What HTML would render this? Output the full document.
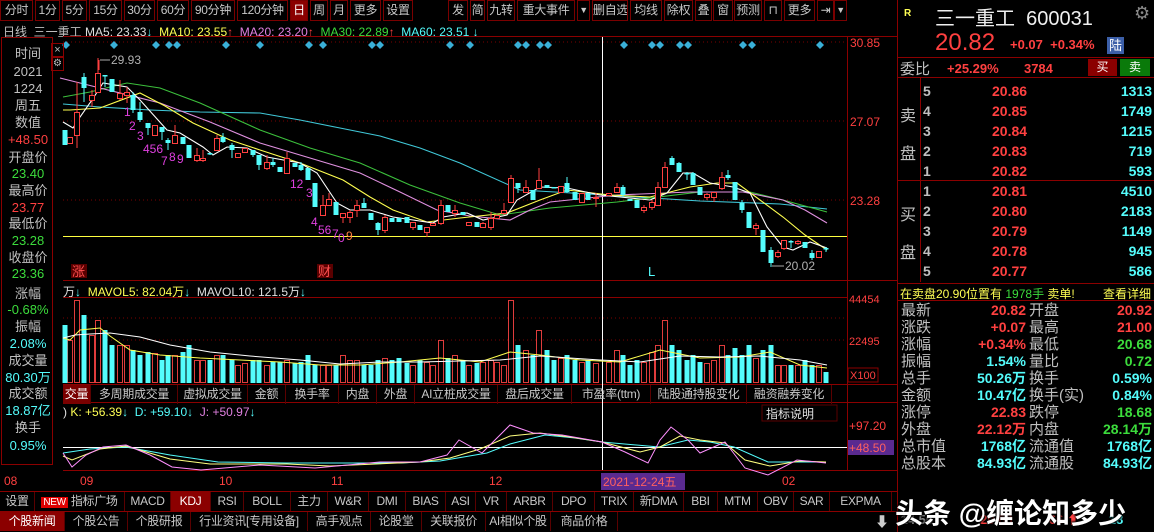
<!DOCTYPE html>
<html><head><meta charset="utf-8"><style>
*{margin:0;padding:0;box-sizing:border-box}
body{width:1154px;height:532px;background:#000;overflow:hidden;position:relative;font-family:"Liberation Sans","Noto Sans CJK SC",sans-serif;font-size:12px;color:#c0c0c0}
.a{position:absolute;white-space:nowrap}
.tb{position:absolute;top:0;height:21px;border:1px solid #7a0000;line-height:19px;text-align:center;font-size:12px;color:#c8c8c8;white-space:nowrap;overflow:hidden;letter-spacing:-0.3px}
.it{position:absolute;height:19px;line-height:19px;text-align:center;border-right:1px solid #5a0000;font-size:12px;color:#c8c8c8;white-space:nowrap;overflow:hidden;letter-spacing:-0.3px}
.r{color:#ff4040}.c{color:#54fcfc}.g{color:#3cdc3c}.y{color:#ffff54}.w{color:#e0e0e0}.p{color:#e080e0}
.lp div{position:absolute;left:0;width:52px;text-align:center;font-size:13px;line-height:16px}
.ob{position:absolute;font-size:14px;font-weight:bold}
.st{position:absolute;font-size:15px;line-height:17px}
</style></head><body>
<div class="tb" style="left:0;width:33px">分时</div><div class="tb" style="left:35px;width:25px">1分</div><div class="tb" style="left:62px;width:25px">5分</div><div class="tb" style="left:89px;width:33px">15分</div><div class="tb" style="left:124px;width:31px">30分</div><div class="tb" style="left:157px;width:32px">60分</div><div class="tb" style="left:191px;width:44px">90分钟</div><div class="tb" style="left:237px;width:51px">120分钟</div><div class="tb" style="left:290px;width:18px;background:#8b0000;color:#fff">日</div><div class="tb" style="left:310px;width:18px">周</div><div class="tb" style="left:330px;width:18px">月</div><div class="tb" style="left:350px;width:31px">更多</div><div class="tb" style="left:383px;width:30px">设置</div>
<div class="tb" style="left:448px;width:20px">发</div><div class="tb" style="left:470px;width:15px">简</div><div class="tb" style="left:487px;width:28px">九转</div><div class="tb" style="left:517px;width:58px">重大事件</div><div class="tb" style="left:577px;width:13px;font-size:9px">▼</div><div class="tb" style="left:592px;width:36px">删自选</div><div class="tb" style="left:630px;width:32px">均线</div><div class="tb" style="left:664px;width:29px">除权</div><div class="tb" style="left:695px;width:17px">叠</div><div class="tb" style="left:713px;width:20px">窗</div><div class="tb" style="left:734px;width:28px">预测</div><div class="tb" style="left:764px;width:18px">⊓</div><div class="tb" style="left:784px;width:31px">更多</div><div class="tb" style="left:817px;width:17px">⇥</div><div class="tb" style="left:834px;width:13px;font-size:9px">▼</div>
<div class="a" style="left:3px;top:23px;font-size:12px">日线 &nbsp;三一重工 <span class="w">MA5: 23.33</span><span class="c">↓</span> <span class="y">&nbsp;MA10: 23.55</span><span class="r">↑</span> <span class="p">&nbsp;MA20: 23.20</span><span class="r">↑</span> <span class="g">&nbsp;MA30: 22.89</span><span class="r">↑</span> <span class="c">&nbsp;MA60: 23.51 ↓</span></div>
<svg class="a" style="left:0;top:0" width="897" height="532">
<g stroke="#8b0000" stroke-width="1" fill="none">
<line x1="847.5" y1="37" x2="847.5" y2="470"/><line x1="63" y1="36.5" x2="897" y2="36.5"/>
<line x1="63" y1="280.5" x2="897" y2="280.5"/><line x1="63" y1="297.5" x2="847" y2="297.5"/><line x1="63" y1="384.5" x2="897" y2="384.5"/><line x1="63" y1="402.5" x2="897" y2="402.5"/><line x1="63" y1="470.5" x2="897" y2="470.5"/><line x1="0" y1="491.5" x2="897" y2="491.5"/><line x1="0" y1="511.5" x2="897" y2="511.5"/>
</g>
<g stroke="#7a0000" stroke-dasharray="1 3"><line x1="63" y1="42" x2="847" y2="42"/><line x1="63" y1="121" x2="847" y2="121"/><line x1="63" y1="200" x2="847" y2="200"/><line x1="63" y1="340" x2="847" y2="340"/><line x1="63" y1="318" x2="847" y2="318"/></g>
<text x="850" y="47" fill="#ff4040" font-size="12">30.85</text><text x="850" y="126" fill="#ff4040" font-size="12">27.07</text><text x="850" y="205" fill="#ff4040" font-size="12">23.28</text>
<text x="849" y="303" fill="#ff4040" font-size="11">44454</text><text x="849" y="345" fill="#ff4040" font-size="11">22495</text><rect x="848" y="368" width="30" height="14" fill="none" stroke="#8b0000"/><text x="850" y="379" fill="#ff4040" font-size="11">X100</text>
<text x="849" y="430" fill="#ff4040" font-size="12">+97.20</text><rect x="848" y="440" width="46" height="15" fill="#5a2a90"/><text x="849" y="452" fill="#ff6060" font-size="12">+48.50</text>
<g fill="#3ab0d8"><path d="M66 41l4 4-4 4-4-4zM114 41l4 4-4 4-4-4zM156 41l4 4-4 4-4-4zM169 41l4 4-4 4-4-4zM177 41l4 4-4 4-4-4zM226 41l4 4-4 4-4-4zM260 41l4 4-4 4-4-4zM309 41l4 4-4 4-4-4zM323 41l4 4-4 4-4-4zM372 41l4 4-4 4-4-4zM380 41l4 4-4 4-4-4zM450 41l4 4-4 4-4-4zM470 41l4 4-4 4-4-4zM518 41l4 4-4 4-4-4zM526 41l4 4-4 4-4-4zM540 41l4 4-4 4-4-4zM548 41l4 4-4 4-4-4zM624 41l4 4-4 4-4-4zM652 41l4 4-4 4-4-4zM660 41l4 4-4 4-4-4zM680 41l4 4-4 4-4-4zM688 41l4 4-4 4-4-4zM743 41l4 4-4 4-4-4zM752 41l4 4-4 4-4-4zM820 41l4 4-4 4-4-4z"/></g>
<line x1="63" y1="236.5" x2="847" y2="236.5" stroke="#ffff40"/>
<line x1="602.5" y1="37" x2="602.5" y2="470" stroke="#fff"/>
<g fill="none" stroke-width="1.1">
<polyline stroke="#40c8d8" points="63,104 100,107 150,110 200,112 260,113 300,120 340,128 380,136 420,148 460,163 520,190 555,192 620,196 700,201 780,204 827,209"/>
<polyline stroke="#3cc03c" points="63,97 90,92 110,87 127,83 160,88 200,103 260,130 310,148 360,163 410,185 460,203 500,215 550,208 617,202 700,192 750,192 783,200 827,212"/>
<polyline stroke="#e090e0" points="60,78 100,88 160,103 210,122 260,143 310,158 360,173 400,192 437,210 470,216 510,220 530,210 550,202 617,195 690,192 743,192 783,200 805,210 827,223"/>
<polyline stroke="#ffff50" points="63,110 70,110 100,108 140,93 165,106 193,123 230,140 260,150 300,163 343,180 370,197 393,210 427,222 460,218 507,213 540,200 567,190 610,195 650,197 690,187 717,183 737,183 760,200 783,217 805,235 827,250"/>
<polyline stroke="#fff" points="63,122 73,128 80,117 92,100 103,83 127,87 140,100 167,130 180,133 203,147 213,155 227,147 247,148 267,157 300,163 317,173 337,203 350,210 370,210 393,217 413,220 433,223 443,217 467,213 483,220 507,215 517,200 540,187 567,188 600,195 650,200 667,193 683,173 693,173 710,183 733,187 750,193 767,227 783,247 793,250 810,242 827,248"/>
</g>
<path stroke="#ff4040" fill="none" d="M70 137v6M77 82v66M92 90v17M98 58v35M120 80v20M127 87v16M155 125v10M175 125v18M197 148v14M203 150v12M217 135v15M238 153v4M245 148v4M267 155v15M287 152v21M323 195v20M329 193v12M343 213v10M350 210v13M357 200v17M385 215v18M413 222v8M427 227v10M433 223v2M441 200v25M455 205v12M469 222v3M483 222v6M491 212v18M497 215v3M504 203v12M511 175v28M526 180v12M539 168v20M561 186v6M582 193v9M596 193v14M609 193v2M617 183v9M644 205v8M652 200v10M658 182v23M665 162v26M707 193v7M714 192v10M722 172v18M756 223v12M778 250v8M784 240v10M798 240v5M819 251v6"/>
<g fill="#000" stroke="#ff4040"><rect x="67.5" y="137.5" width="5" height="6"/><rect x="74.5" y="112.5" width="5" height="23"/><rect x="89.5" y="95.5" width="5" height="5"/><rect x="95.5" y="73.5" width="5" height="19"/><rect x="117.5" y="93.5" width="5" height="5"/><rect x="124.5" y="92.5" width="5" height="3"/><rect x="152.5" y="125.5" width="5" height="10"/><rect x="172.5" y="135.5" width="5" height="8"/><rect x="194.5" y="155.5" width="5" height="5"/><rect x="200.5" y="158.5" width="5" height="2"/><rect x="214.5" y="138.5" width="5" height="12"/><rect x="235.5" y="153.5" width="5" height="4"/><rect x="242.5" y="148.5" width="5" height="4"/><rect x="264.5" y="162.5" width="5" height="6"/><rect x="284.5" y="158.5" width="5" height="15"/><rect x="320.5" y="205.5" width="5" height="10"/><rect x="326.5" y="199.5" width="5" height="6"/><rect x="340.5" y="213.5" width="5" height="4"/><rect x="347.5" y="212.5" width="5" height="5"/><rect x="354.5" y="205.5" width="5" height="5"/><rect x="382.5" y="217.5" width="5" height="13"/><rect x="410.5" y="222.5" width="5" height="5"/><rect x="424.5" y="227.5" width="5" height="5"/><rect x="430.5" y="223.5" width="5" height="2"/><rect x="438.5" y="205.5" width="5" height="18"/><rect x="452.5" y="210.5" width="5" height="3"/><rect x="466.5" y="222.5" width="5" height="3"/><rect x="480.5" y="223.5" width="5" height="4"/><rect x="488.5" y="218.5" width="5" height="9"/><rect x="494.5" y="215.5" width="5" height="3"/><rect x="501.5" y="210.5" width="5" height="3"/><rect x="508.5" y="178.5" width="5" height="24"/><rect x="523.5" y="187.5" width="5" height="5"/><rect x="536.5" y="180.5" width="5" height="8"/><rect x="558.5" y="186.5" width="5" height="6"/><rect x="579.5" y="193.5" width="5" height="9"/><rect x="593.5" y="197.5" width="5" height="1"/><rect x="606.5" y="193.5" width="5" height="2"/><rect x="614.5" y="187.5" width="5" height="5"/><rect x="641.5" y="207.5" width="5" height="3"/><rect x="649.5" y="202.5" width="5" height="5"/><rect x="655.5" y="187.5" width="5" height="18"/><rect x="662.5" y="167.5" width="5" height="20"/><rect x="704.5" y="194.5" width="5" height="3"/><rect x="711.5" y="192.5" width="5" height="5"/><rect x="719.5" y="177.5" width="5" height="11"/><rect x="753.5" y="225.5" width="5" height="3"/><rect x="775.5" y="252.5" width="5" height="4"/><rect x="781.5" y="240.5" width="5" height="8"/><rect x="795.5" y="241.5" width="5" height="2"/><rect x="816.5" y="251.5" width="5" height="6"/></g>
<path stroke="#54fcfc" fill="none" d="M84 73v29M105 75v12M133 92v21M140 102v20M148 123v12M162 127v13M168 138v12M210 153v2M223 133v10M232 143v15M253 150v7M259 155v15M273 158v9M301 162v9M364 198v10M378 222v13M518 183v10M567 177v16M623 185v12M672 156v9M679 162v10M687 172v8M693 172v13M728 170v10M742 200v13M771 247v20M791 240v8M812 250v10M826 247v5"/>
<g fill="#54fcfc"><rect x="62.5" y="130" width="5" height="15"/><rect x="81.5" y="77" width="5" height="11"/><rect x="102.5" y="75" width="5" height="1.5"/><rect x="109.5" y="79" width="5" height="13"/><rect x="130.5" y="95" width="5" height="15"/><rect x="137.5" y="112" width="5" height="8"/><rect x="145.5" y="123" width="5" height="5"/><rect x="159.5" y="127" width="5" height="5"/><rect x="165.5" y="140" width="5" height="3"/><rect x="180.5" y="137" width="5" height="7"/><rect x="186.5" y="145" width="5" height="13"/><rect x="207.5" y="153" width="5" height="1.5"/><rect x="220.5" y="137" width="5" height="5"/><rect x="229.5" y="145" width="5" height="5"/><rect x="250.5" y="150" width="5" height="5"/><rect x="256.5" y="155" width="5" height="10"/><rect x="270.5" y="162" width="5" height="3"/><rect x="277.5" y="167" width="5" height="5"/><rect x="292.5" y="163" width="5" height="4"/><rect x="298.5" y="165" width="5" height="5"/><rect x="305.5" y="168" width="5" height="12"/><rect x="312.5" y="183" width="5" height="24"/><rect x="333.5" y="202" width="5" height="13"/><rect x="361.5" y="203" width="5" height="5"/><rect x="368.5" y="213" width="5" height="7"/><rect x="375.5" y="223" width="5" height="7"/><rect x="389.5" y="218" width="5" height="4"/><rect x="396.5" y="218" width="5" height="4"/><rect x="404.5" y="217" width="5" height="6"/><rect x="417.5" y="225" width="5" height="5"/><rect x="445.5" y="205" width="5" height="7"/><rect x="460.5" y="212" width="5" height="3"/><rect x="474.5" y="222" width="5" height="5"/><rect x="515.5" y="183" width="5" height="5"/><rect x="530.5" y="190" width="5" height="10"/><rect x="544.5" y="185" width="5" height="3"/><rect x="551.5" y="187" width="5" height="1.5"/><rect x="564.5" y="183" width="5" height="9"/><rect x="572.5" y="192" width="5" height="8"/><rect x="585.5" y="193" width="5" height="7"/><rect x="620.5" y="187" width="5" height="8"/><rect x="627.5" y="199" width="5" height="2"/><rect x="634.5" y="200" width="5" height="8"/><rect x="669.5" y="158" width="5" height="7"/><rect x="676.5" y="163" width="5" height="9"/><rect x="684.5" y="173" width="5" height="1.5"/><rect x="690.5" y="173" width="5" height="12"/><rect x="697.5" y="187" width="5" height="8"/><rect x="725.5" y="175" width="5" height="3"/><rect x="732.5" y="182" width="5" height="18"/><rect x="739.5" y="203" width="5" height="7"/><rect x="746.5" y="212" width="5" height="16"/><rect x="760.5" y="230" width="5" height="22"/><rect x="768.5" y="250" width="5" height="13"/><rect x="788.5" y="241" width="5" height="1.5"/><rect x="802.5" y="242" width="5" height="6"/><rect x="809.5" y="253" width="5" height="5"/><rect x="823.5" y="248" width="5" height="1.5"/></g>
<g font-size="12" fill="#e040e0"><text x="124" y="116">1</text><text x="129" y="130">2</text><text x="137" y="140">3</text><text x="143" y="153">456</text><text x="161" y="165">7</text><text x="169" y="161">8</text><text x="177" y="163">9</text><text x="290" y="188">12</text><text x="306" y="197">3</text><text x="311" y="226">4</text><text x="318" y="234">56</text><text x="332" y="238">7</text><text x="338" y="242">0</text><text x="346" y="240" fill="#ff8040">9</text></g>
<path d="M100 60h10" stroke="#aaa"/><path d="M99 60v10" stroke="#ff4040"/><text x="111" y="64" fill="#b0b0b0" font-size="12">29.93</text>
<path d="M772 266h12" stroke="#aaa"/><text x="785" y="270" fill="#b0b0b0" font-size="12">20.02</text>
<rect x="71" y="264" width="16" height="14" fill="#5a0000"/><text x="72" y="276" fill="#ff5050" font-size="13">涨</text>
<rect x="317" y="264" width="16" height="14" fill="#5a0000"/><text x="318" y="276" fill="#ff5050" font-size="13">财</text>
<text x="648" y="276" fill="#54fcfc" font-size="13">L</text>
<g fill="#000" stroke="#e03c3c"><rect x="67.5" y="340.5" width="5" height="42"/><rect x="74.5" y="300.5" width="5" height="82"/><rect x="89.5" y="335.5" width="5" height="47"/><rect x="95.5" y="320.5" width="5" height="62"/><rect x="117.5" y="345.5" width="5" height="37"/><rect x="124.5" y="345.5" width="5" height="37"/><rect x="152.5" y="353.5" width="5" height="29"/><rect x="172.5" y="355.5" width="5" height="27"/><rect x="194.5" y="360.5" width="5" height="22"/><rect x="200.5" y="360.5" width="5" height="22"/><rect x="214.5" y="355.5" width="5" height="27"/><rect x="235.5" y="365.5" width="5" height="17"/><rect x="242.5" y="363.5" width="5" height="19"/><rect x="264.5" y="365.5" width="5" height="17"/><rect x="284.5" y="360.5" width="5" height="22"/><rect x="320.5" y="365.5" width="5" height="17"/><rect x="326.5" y="365.5" width="5" height="17"/><rect x="340.5" y="355.5" width="5" height="27"/><rect x="347.5" y="360.5" width="5" height="22"/><rect x="354.5" y="360.5" width="5" height="22"/><rect x="382.5" y="358.5" width="5" height="24"/><rect x="410.5" y="365.5" width="5" height="17"/><rect x="424.5" y="362.5" width="5" height="20"/><rect x="430.5" y="365.5" width="5" height="17"/><rect x="438.5" y="340.5" width="5" height="42"/><rect x="452.5" y="355.5" width="5" height="27"/><rect x="466.5" y="365.5" width="5" height="17"/><rect x="480.5" y="362.5" width="5" height="20"/><rect x="488.5" y="360.5" width="5" height="22"/><rect x="494.5" y="362.5" width="5" height="20"/><rect x="501.5" y="365.5" width="5" height="17"/><rect x="508.5" y="300.5" width="5" height="82"/><rect x="523.5" y="350.5" width="5" height="32"/><rect x="536.5" y="330.5" width="5" height="52"/><rect x="558.5" y="358.5" width="5" height="24"/><rect x="579.5" y="362.5" width="5" height="20"/><rect x="593.5" y="363.5" width="5" height="19"/><rect x="606.5" y="362.5" width="5" height="20"/><rect x="614.5" y="350.5" width="5" height="32"/><rect x="641.5" y="362.5" width="5" height="20"/><rect x="649.5" y="352.5" width="5" height="30"/><rect x="655.5" y="345.5" width="5" height="37"/><rect x="662.5" y="320.5" width="5" height="62"/><rect x="704.5" y="363.5" width="5" height="19"/><rect x="711.5" y="360.5" width="5" height="22"/><rect x="719.5" y="345.5" width="5" height="37"/><rect x="753.5" y="358.5" width="5" height="24"/><rect x="775.5" y="365.5" width="5" height="17"/><rect x="781.5" y="365.5" width="5" height="17"/><rect x="795.5" y="365.5" width="5" height="17"/><rect x="816.5" y="365.5" width="5" height="17"/></g>
<g fill="#54fcfc"><rect x="62.5" y="325" width="5" height="58"/><rect x="81.5" y="315" width="5" height="68"/><rect x="102.5" y="330" width="5" height="53"/><rect x="109.5" y="345" width="5" height="38"/><rect x="130.5" y="350" width="5" height="33"/><rect x="137.5" y="355" width="5" height="28"/><rect x="145.5" y="352" width="5" height="31"/><rect x="159.5" y="360" width="5" height="23"/><rect x="165.5" y="355" width="5" height="28"/><rect x="180.5" y="352" width="5" height="31"/><rect x="186.5" y="345" width="5" height="38"/><rect x="207.5" y="360" width="5" height="23"/><rect x="220.5" y="355" width="5" height="28"/><rect x="229.5" y="360" width="5" height="23"/><rect x="250.5" y="360" width="5" height="23"/><rect x="256.5" y="360" width="5" height="23"/><rect x="270.5" y="362" width="5" height="21"/><rect x="277.5" y="362" width="5" height="21"/><rect x="292.5" y="363" width="5" height="20"/><rect x="298.5" y="362" width="5" height="21"/><rect x="305.5" y="355" width="5" height="28"/><rect x="312.5" y="365" width="5" height="18"/><rect x="333.5" y="365" width="5" height="18"/><rect x="361.5" y="365" width="5" height="18"/><rect x="368.5" y="365" width="5" height="18"/><rect x="375.5" y="360" width="5" height="23"/><rect x="389.5" y="360" width="5" height="23"/><rect x="396.5" y="358" width="5" height="25"/><rect x="404.5" y="363" width="5" height="20"/><rect x="417.5" y="360" width="5" height="23"/><rect x="445.5" y="358" width="5" height="25"/><rect x="460.5" y="360" width="5" height="23"/><rect x="474.5" y="363" width="5" height="20"/><rect x="515.5" y="345" width="5" height="38"/><rect x="530.5" y="355" width="5" height="28"/><rect x="544.5" y="350" width="5" height="33"/><rect x="551.5" y="360" width="5" height="23"/><rect x="564.5" y="355" width="5" height="28"/><rect x="572.5" y="360" width="5" height="23"/><rect x="585.5" y="360" width="5" height="23"/><rect x="620.5" y="355" width="5" height="28"/><rect x="627.5" y="365" width="5" height="18"/><rect x="634.5" y="360" width="5" height="23"/><rect x="669.5" y="345" width="5" height="38"/><rect x="676.5" y="350" width="5" height="33"/><rect x="684.5" y="360" width="5" height="23"/><rect x="690.5" y="355" width="5" height="28"/><rect x="697.5" y="362" width="5" height="21"/><rect x="725.5" y="355" width="5" height="28"/><rect x="732.5" y="348" width="5" height="35"/><rect x="739.5" y="355" width="5" height="28"/><rect x="746.5" y="345" width="5" height="38"/><rect x="760.5" y="350" width="5" height="33"/><rect x="768.5" y="345" width="5" height="38"/><rect x="788.5" y="365" width="5" height="18"/><rect x="802.5" y="360" width="5" height="23"/><rect x="809.5" y="365" width="5" height="18"/><rect x="823.5" y="372" width="5" height="11"/></g>
<polyline fill="none" stroke="#ffff50" points="63,338 70,340 80,330 100,328 110,336 130,350 160,355 200,358 240,360 280,362 320,365 360,365 400,362 440,358 480,362 510,352 540,355 580,360 620,362 660,350 700,358 740,357 770,352 800,365 827,368"/>
<polyline fill="none" stroke="#fff" points="63,338 75,335 90,334 110,333 140,337 170,345 210,352 250,356 300,360 340,364 380,362 420,362 460,361 500,360 540,356 600,360 640,362 680,356 720,357 760,356 800,360 827,365"/>
<rect x="762" y="405" width="75" height="16" fill="#000" stroke="#5a0000"/><text x="766" y="418" fill="#e0e0e0" font-size="12">指标说明</text>
<line x1="63" y1="447.5" x2="847" y2="447.5" stroke="#fff"/>
<polyline fill="none" stroke="#54fcfc" points="63,453 90,449 126,447 170,455 218,462 287,463 401,463 440,461 487,453 510,444 545,435 575,438 602,442 659,447 688,440 710,442 734,447 768,462 826,462"/>
<polyline fill="none" stroke="#ffff80" points="63,456 72,460 100,449 126,446 170,459 210,464 287,464 330,466 420,462 450,458 480,449 510,436 540,433 570,437 602,442 640,452 660,447 680,436 700,440 725,443 745,460 770,466 800,461 826,462"/>
<polyline fill="none" stroke="#ff90ff" points="63,453 72,467 86,455 103,447 126,445 150,455 172,467 201,470 260,465 315,468 380,462 420,462 447,455 459,440 482,453 510,425 533,433 562,435 602,442 625,452 648,463 660,440 671,427 688,440 700,453 725,442 745,468 768,475 797,460 826,463"/>
<g font-size="12" fill="#ff4040"><text x="4" y="485">08</text><text x="80" y="485">09</text><text x="219" y="485">10</text><text x="331" y="485">11</text><text x="489" y="485">12</text><text x="782" y="485">02</text></g>
<rect x="601" y="473" width="84" height="17" fill="#5a2a90"/><text x="603" y="486" fill="#ff6060" font-size="12">2021-12-24五</text>
</svg>
<div class="a" style="left:63px;top:283px;font-size:12px"><span class="w">万</span><span class="c">↓</span> <span class="y">&nbsp;MAVOL5: 82.04万</span><span class="c">↓</span> <span class="w">&nbsp;MAVOL10: 121.5万</span><span class="c">↓</span></div>
<div class="it" style="left:63px;top:385px;width:28px;background:#7a0000;color:#fff">交量</div><div class="it" style="left:91px;top:385px;width:87px">多周期成交量</div><div class="it" style="left:178px;top:385px;width:70px">虚拟成交量</div><div class="it" style="left:248px;top:385px;width:38px">金额</div><div class="it" style="left:286px;top:385px;width:53px">换手率</div><div class="it" style="left:339px;top:385px;width:38px">内盘</div><div class="it" style="left:377px;top:385px;width:38px">外盘</div><div class="it" style="left:415px;top:385px;width:83px">AI立桩成交量</div><div class="it" style="left:498px;top:385px;width:74px">盘后成交量</div><div class="it" style="left:572px;top:385px;width:79px">市盈率(ttm)</div><div class="it" style="left:651px;top:385px;width:96px">陆股通持股变化</div><div class="it" style="left:747px;top:385px;width:85px">融资融券变化</div>
<div class="a" style="left:63px;top:405px;font-size:12px"><span class="w">) </span><span class="y">K: +56.39</span><span class="c">↓</span> <span class="c">&nbsp;D: +59.10↓</span> <span class="p">&nbsp;J: +50.97</span><span class="c">↓</span></div>
<div class="it" style="left:0;top:492px;width:35px">设置</div><div class="it" style="left:35px;top:492px;width:90px"><span style="background:#d00;color:#fff;font-size:10px;padding:0 2px">NEW</span> 指标广场</div><div class="it" style="left:125px;top:492px;width:46px">MACD</div><div class="it" style="left:171px;top:492px;width:40px;background:#8b0000;color:#fff">KDJ</div><div class="it" style="left:211px;top:492px;width:33px">RSI</div><div class="it" style="left:244px;top:492px;width:47px">BOLL</div><div class="it" style="left:291px;top:492px;width:37px">主力</div><div class="it" style="left:328px;top:492px;width:41px">W&amp;R</div><div class="it" style="left:369px;top:492px;width:37px">DMI</div><div class="it" style="left:406px;top:492px;width:40px">BIAS</div><div class="it" style="left:446px;top:492px;width:30px">ASI</div><div class="it" style="left:476px;top:492px;width:31px">VR</div><div class="it" style="left:507px;top:492px;width:46px">ARBR</div><div class="it" style="left:553px;top:492px;width:42px">DPO</div><div class="it" style="left:595px;top:492px;width:39px">TRIX</div><div class="it" style="left:634px;top:492px;width:50px">新DMA</div><div class="it" style="left:684px;top:492px;width:34px">BBI</div><div class="it" style="left:718px;top:492px;width:40px">MTM</div><div class="it" style="left:758px;top:492px;width:36px">OBV</div><div class="it" style="left:794px;top:492px;width:36px">SAR</div><div class="it" style="left:830px;top:492px;width:62px">EXPMA</div>
<div class="it" style="left:0;top:512px;width:65px;background:#8b0000;color:#fff">个股新闻</div><div class="it" style="left:65px;top:512px;width:63px">个股公告</div><div class="it" style="left:128px;top:512px;width:63px">个股研报</div><div class="it" style="left:191px;top:512px;width:117px">行业资讯[专用设备]</div><div class="it" style="left:308px;top:512px;width:63px">高手观点</div><div class="it" style="left:371px;top:512px;width:51px">论股堂</div><div class="it" style="left:422px;top:512px;width:64px">关联报价</div><div class="it" style="left:486px;top:512px;width:65px">AI相似个股</div><div class="it" style="left:551px;top:512px;width:67px">商品价格</div><div class="a" style="left:875px;top:512px;font-size:14px;color:#ccc">⬇</div>
<div class="a lp" style="left:1px;top:37px;width:52px;height:428px;border:1px solid #8b0000;background:#000">
<div style="top:8px">时间</div><div style="top:26px">2021</div><div style="top:43px">1224</div><div style="top:60px">周五</div><div style="top:77px">数值</div><div class="r" style="top:94px">+48.50</div><div style="top:112px">开盘价</div><div class="g" style="top:128px">23.40</div><div style="top:145px">最高价</div><div class="r" style="top:162px">23.77</div><div style="top:178px">最低价</div><div class="g" style="top:195px">23.28</div><div style="top:212px">收盘价</div><div class="g" style="top:228px">23.36</div><div style="top:248px">涨幅</div><div class="g" style="top:264px">-0.68%</div><div style="top:281px">振幅</div><div class="c" style="top:298px">2.08%</div><div style="top:315px">成交量</div><div class="c" style="top:332px">80.30万</div><div style="top:348px">成交额</div><div class="c" style="top:365px">18.87亿</div><div style="top:382px">换手</div><div class="c" style="top:400px">0.95%</div></div>
<div class="a" style="left:51px;top:43px;width:13px;height:14px;border:1px solid #8b0000;font-size:11px;line-height:12px;text-align:center">×</div><div class="a" style="left:51px;top:57px;width:13px;height:14px;border:1px solid #8b0000;font-size:10px;line-height:12px;text-align:center">⚙</div>
<div class="a" style="left:897px;top:0;width:257px;height:532px;border-left:1px solid #8b0000"></div>
<div class="a y" style="left:904px;top:8px;font-size:10px;font-weight:bold">R</div>
<div class="a" style="left:935px;top:2px;font-size:20px;color:#f0f0f0">三一重工 &nbsp;600031</div>
<div class="a" style="left:1134px;top:3px;font-size:18px;color:#888">⚙</div>
<div class="a r" style="left:935px;top:29px;font-size:24px;line-height:28px">20.82</div>
<div class="a r" style="left:1010px;top:37px;font-size:13px;font-weight:bold">+0.07 &nbsp;+0.34%</div>
<div class="a" style="left:1107px;top:37px;width:17px;height:17px;background:#3c5fa8;color:#fff;font-size:13px;line-height:17px;text-align:center">陆</div>
<div class="a" style="left:897px;top:57px;width:257px;border-top:1px solid #8b0000"></div>
<div class="a" style="left:900px;top:58px;font-size:15px">委比</div>
<div class="a r" style="left:947px;top:61px;font-size:13px;font-weight:bold">+25.29% &nbsp; &nbsp; &nbsp; 3784</div>
<div class="a" style="left:1088px;top:59px;width:29px;height:17px;background:#8b0000;color:#fff;text-align:center;line-height:17px">买</div><div class="a" style="left:1120px;top:59px;width:30px;height:17px;background:#0a7a0a;color:#fff;text-align:center;line-height:17px">卖</div>
<div class="a" style="left:897px;top:77px;width:257px;border-top:1px solid #8b0000"></div>
<div class="a" style="left:897px;top:180px;width:257px;border-top:1px solid #8b0000"></div>
<div class="a" style="left:920px;top:77px;height:205px;border-left:1px solid #8b0000"></div>
<div class="a" style="left:900px;top:102px;font-size:16px">卖</div><div class="a" style="left:900px;top:140px;font-size:16px">盘</div>
<div class="a" style="left:900px;top:201px;font-size:16px">买</div><div class="a" style="left:900px;top:239px;font-size:16px">盘</div>
<div class="ob" style="left:923px;top:81px;color:#c0c0c0;line-height:20px">5<br>4<br>3<br>2<br>1</div>
<div class="ob r" style="left:992px;top:81px;line-height:20px">20.86<br>20.85<br>20.84<br>20.83<br>20.82</div>
<div class="ob c" style="right:2px;top:81px;line-height:20px;text-align:right">1313<br>1749<br>1215<br>719<br>593</div>
<div class="ob" style="left:923px;top:181px;color:#c0c0c0;line-height:20px">1<br>2<br>3<br>4<br>5</div>
<div class="ob r" style="left:992px;top:181px;line-height:20px">20.81<br>20.80<br>20.79<br>20.78<br>20.77</div>
<div class="ob c" style="right:2px;top:181px;line-height:20px;text-align:right">4510<br>2183<br>1149<br>945<br>586</div>
<div class="a" style="left:897px;top:283px;width:257px;border-top:1px solid #8b0000"></div>
<div class="a y" style="left:900px;top:285px;font-size:12px">在卖盘20.90位置有 <span class="g">1978手</span> 卖单!</div><div class="a y" style="left:1103px;top:285px;font-size:12px">查看详细</div>
<div class="a" style="left:897px;top:300px;width:257px;border-top:1px solid #8b0000"></div>
<div class="st" style="left:901px;top:302px">最新<br>涨跌<br>涨幅<br>振幅<br>总手<br>金额<br>涨停<br>外盘<br>总市值<br>总股本</div>
<div class="st" style="left:1029px;top:302px">开盘<br>最高<br>最低<br>量比<br>换手<br>换手(实)<br>跌停<br>内盘<br>流通值<br>流通股</div>
<div class="st" style="left:950px;width:76px;top:302px;text-align:right;font-weight:bold;font-size:14px"><span class="r">20.82</span><br><span class="r">+0.07</span><br><span class="r">+0.34%</span><br><span class="c">1.54%</span><br><span class="c">50.26万</span><br><span class="c">10.47亿</span><br><span class="r">22.83</span><br><span class="r">22.12万</span><br><span class="c">1768亿</span><br><span class="c">84.93亿</span></div>
<div class="st" style="left:1070px;width:82px;top:302px;text-align:right;font-weight:bold;font-size:14px"><span class="r">20.92</span><br><span class="r">21.00</span><br><span class="g">20.68</span><br><span class="g">0.72</span><br><span class="c">0.59%</span><br><span class="c">0.84%</span><br><span class="g">18.68</span><br><span class="g">28.14万</span><br><span class="c">1768亿</span><br><span class="c">84.93亿</span></div>
<div class="a" style="left:897px;top:509px;font-size:13px;color:#888;font-weight:bold">&nbsp;14.56 &nbsp; &nbsp; &nbsp; &nbsp; &nbsp; &nbsp; <span class="r">20.00</span> &nbsp; &nbsp; &nbsp; &nbsp; &nbsp;<span class="r">66 ⬆</span> &nbsp; &nbsp; &nbsp; &nbsp;<span class="c">18</span></div>
<div class="a" style="left:895px;top:492px;font-size:28px;color:#fff;font-weight:bold;text-shadow:1px 1px 2px #000,-1px -1px 2px #000">头条 @缠论知多少</div>
</body></html>
